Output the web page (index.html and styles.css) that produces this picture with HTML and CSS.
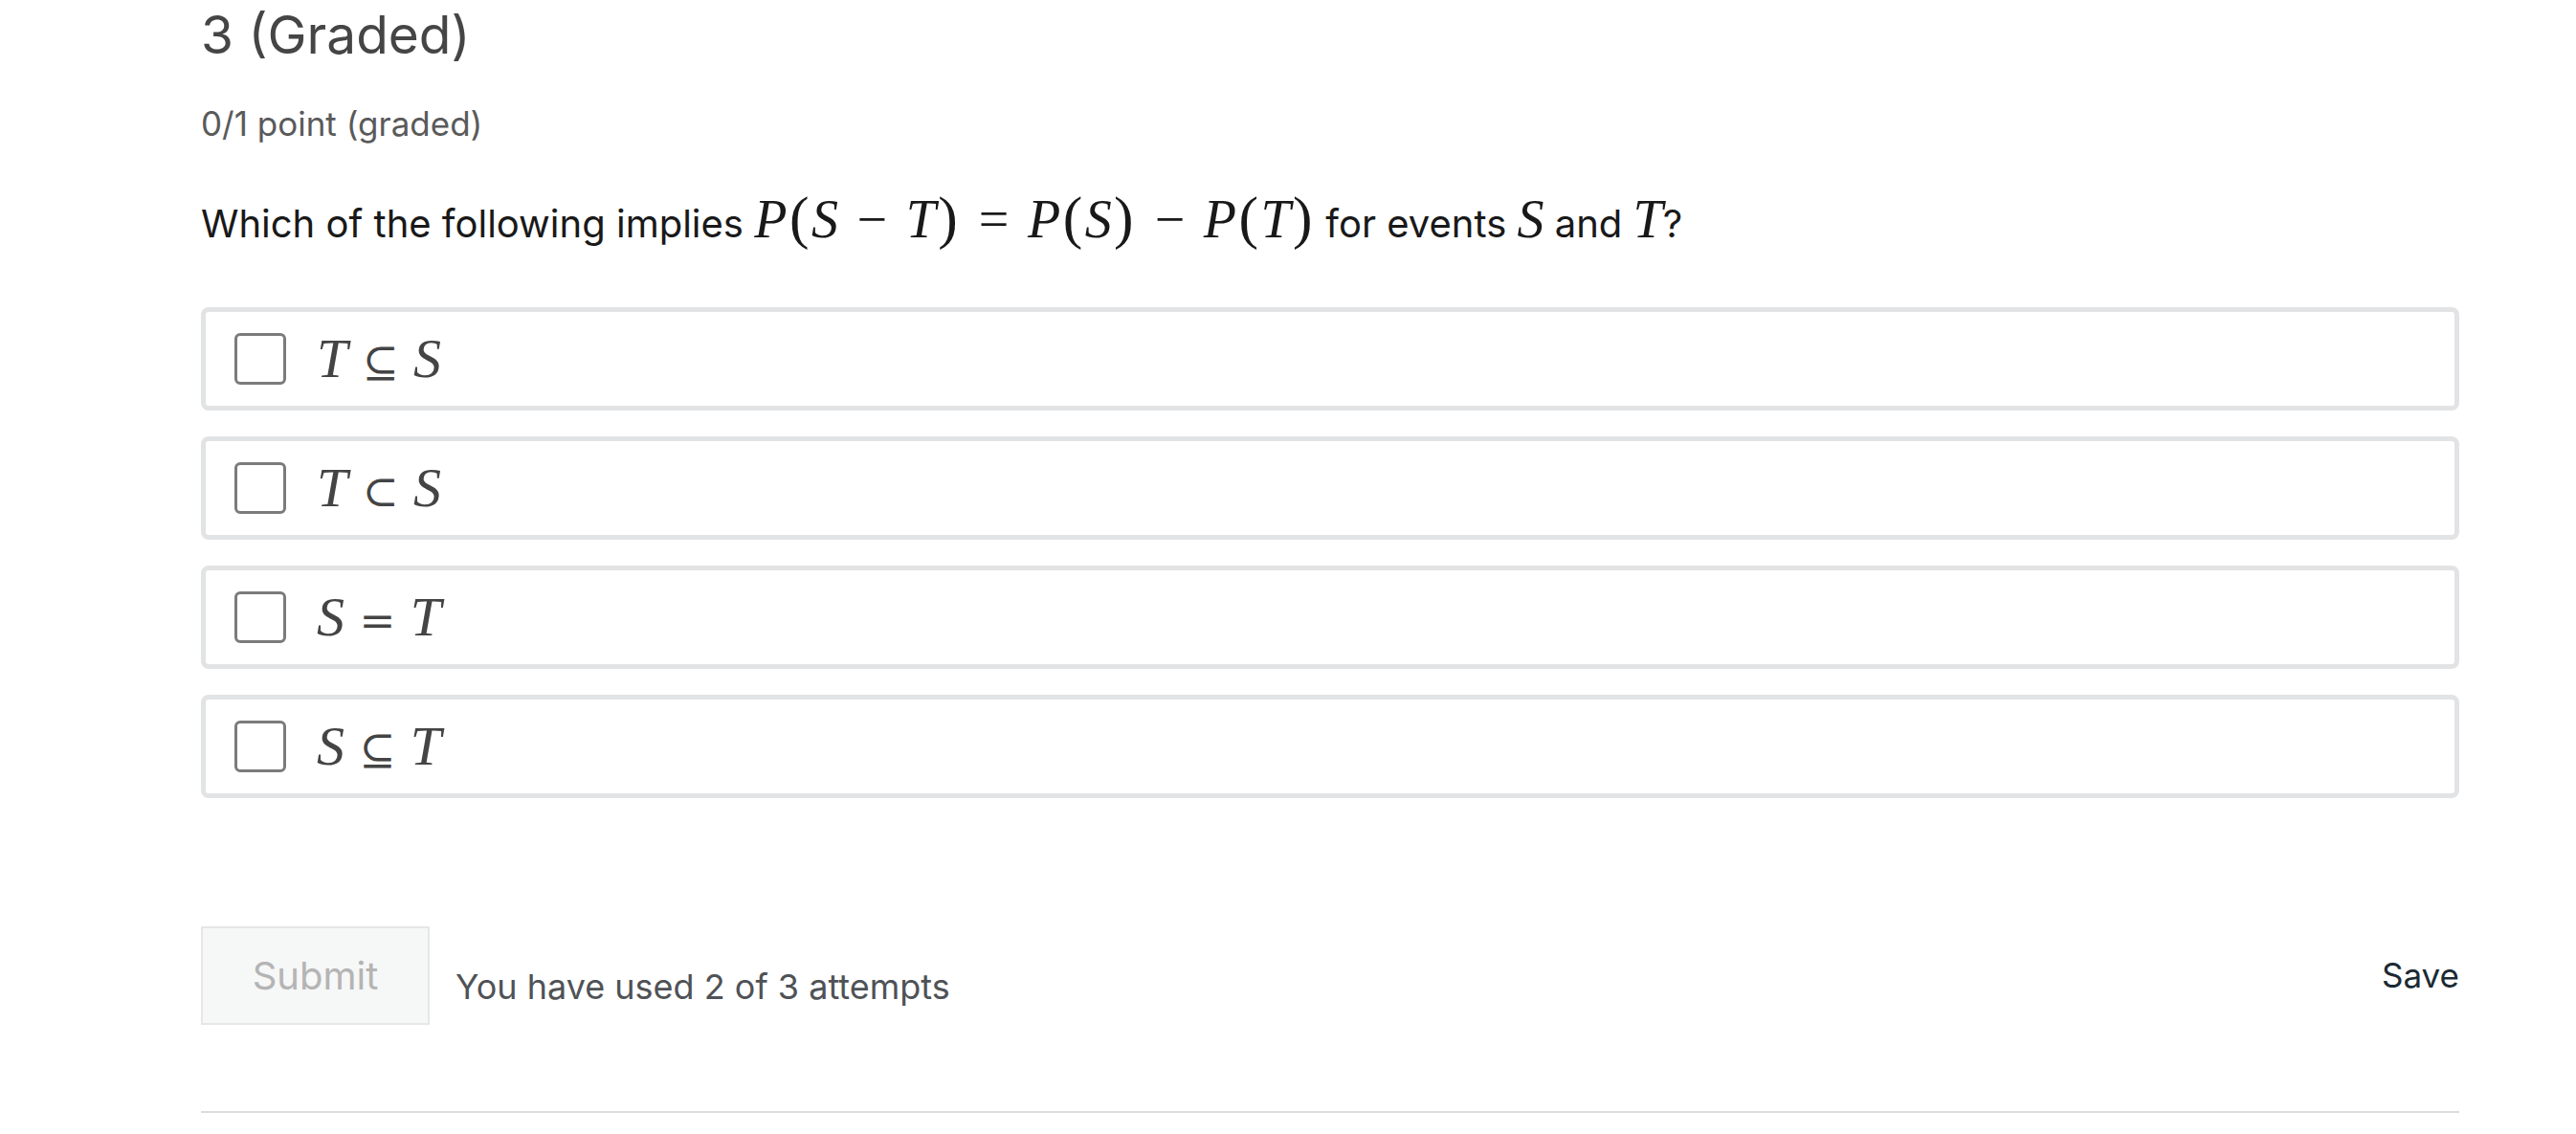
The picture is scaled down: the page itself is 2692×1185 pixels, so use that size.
FILE: index.html
```html
<!DOCTYPE html>
<html lang="en">
<head>
<meta charset="utf-8">
<title>3 (Graded)</title>
<link rel="stylesheet" href="styles.css">
</head>
<body>
<div class="problem">
  <h2 class="title">3 (Graded)</h2>
  <div class="points">0/1 point (graded)</div>
  <p class="question">Which of the following implies <span class="math"><i>P</i><span class="paren">(</span><i>S</i><span class="op">−</span><i>T</i><span class="paren">)</span><span class="op">=</span><i>P</i><span class="paren">(</span><i>S</i><span class="paren">)</span><span class="op">−</span><i>P</i><span class="paren">(</span><i>T</i><span class="paren">)</span></span> for events <span class="math"><i>S</i></span> and <span class="math"><i>T</i></span>?</p>
  <div class="options">
    <label class="option"><span class="box"></span><span class="math opt"><i>T</i><span class="rel">⊆</span><i>S</i></span></label>
    <label class="option"><span class="box"></span><span class="math opt"><i>T</i><span class="rel">⊂</span><i>S</i></span></label>
    <label class="option"><span class="box"></span><span class="math opt"><i>S</i><span class="rel">=</span><i>T</i></span></label>
    <label class="option"><span class="box"></span><span class="math opt"><i>S</i><span class="rel">⊆</span><i>T</i></span></label>
  </div>
  <div class="actions">
    <div class="left">
      <button class="submit" disabled>Submit</button>
      <span class="attempts">You have used 2 of 3 attempts</span>
    </div>
    <span class="save">Save</span>
  </div>
  <hr class="rule">
</div>
</body>
</html>
```
FILE: styles.css
```css
html, body {
  margin: 0;
  padding: 0;
  background: #ffffff;
}
body {
  font-family: "Inter", "Noto Sans", sans-serif;
}
.problem {
  width: 2360px;
  margin-left: 210px;
}
.title {
  margin: 3px 0 0 0;
  font-size: 55px;
  font-weight: 400;
  color: #454545;
  line-height: 66px;
}
.points {
  margin-top: 39px;
  font-size: 35px;
  color: #5a5a5a;
  line-height: 42px;
}
.question {
  margin: 54px 0 0 0;
  font-size: 40px;
  color: #191919;
  line-height: 60px;
}
.math {
  font-family: "Liberation Serif", "DejaVu Serif", serif;
  font-size: 1.4em;
  line-height: 0;
  white-space: nowrap;
}
.math i {
  font-style: italic;
}
.math .op {
  margin: 0 0.35em;
}
.math .paren {
  font-size: 1.1em;
  margin: 0 0.04em;
}
.options {
  margin-top: 57px;
  display: flex;
  flex-direction: column;
  gap: 27px;
}
.option {
  display: flex;
  align-items: center;
  height: 108px;
  box-sizing: border-box;
  border: 5px solid #e2e3e5;
  border-radius: 8px;
  padding-left: 30px;
}
.box {
  width: 54px;
  height: 54px;
  box-sizing: border-box;
  border: 3px solid #7b7b7b;
  border-radius: 6px;
  flex: none;
}
.opt {
  margin-left: 32px;
  font-size: 58px;
  line-height: 1;
  color: #444444;
}
.opt .rel {
  font-family: "DejaVu Serif", serif;
  font-size: 0.78em;
  margin: 0 0.34em;
}
.actions {
  margin-top: 134px;
  display: flex;
  justify-content: space-between;
  align-items: flex-start;
}
.left {
  display: flex;
  align-items: flex-start;
}
.submit {
  width: 239px;
  height: 103px;
  box-sizing: border-box;
  border: 2px solid #e6e6e6;
  background: #f6f7f7;
  color: #b4b4b4;
  font-family: "Inter", sans-serif;
  font-size: 40px;
  padding: 0;
  margin: 0;
}
.attempts {
  margin-left: 27px;
  margin-top: 41px;
  font-size: 36px;
  color: #4f5256;
}
.save {
  margin-top: 30px;
  font-size: 35px;
  color: #1b2a33;
}
.rule {
  margin: 90px 0 0 0;
  border: 0;
  height: 2px;
  background: #dcdcdc;
}
```
